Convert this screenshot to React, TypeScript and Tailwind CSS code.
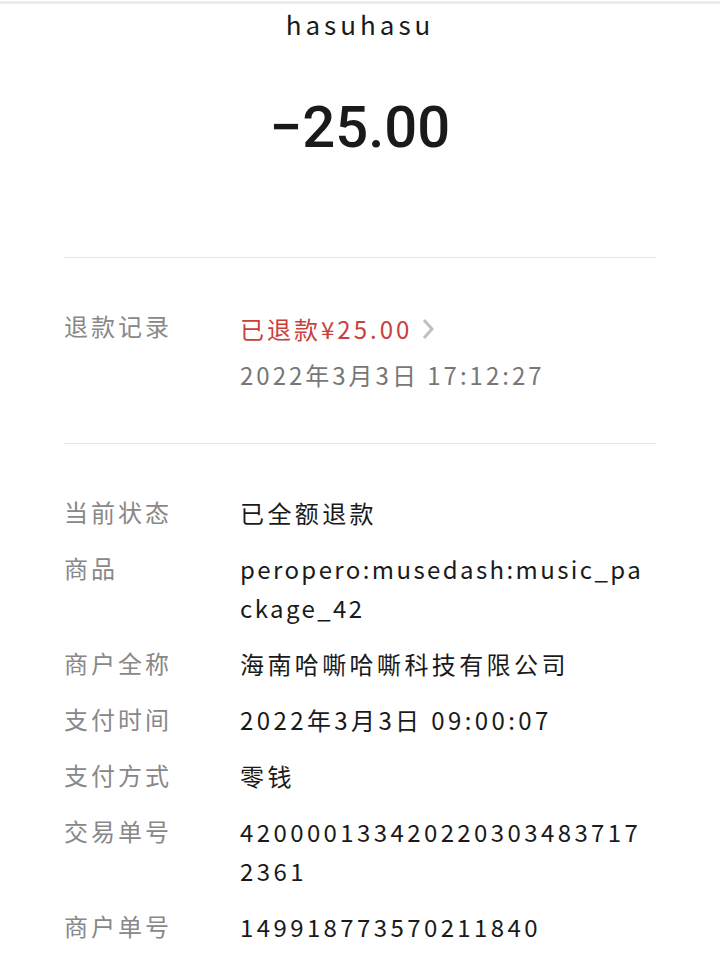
const font = { fontFamily: '"Noto Sans CJK SC", "Noto Sans", sans-serif' };

const rows: { label: string; lines: string[]; latin?: boolean }[] = [
  { label: '当前状态', lines: ['已全额退款'] },
  { label: '商品', lines: ['peropero:musedash:music_pa', 'ckage_42'], latin: true },
  { label: '商户全称', lines: ['海南哈嘶哈嘶科技有限公司'] },
  { label: '支付时间', lines: ['2022年3月3日 09:00:07'] },
  { label: '支付方式', lines: ['零钱'] },
  { label: '交易单号', lines: ['420000133420220303483717', '2361'] },
  { label: '商户单号', lines: ['149918773570211840'] },
];

const Row = ({ label, lines, latin }: { label: string; lines: string[]; latin?: boolean }) => (
  <div className="flex">
    <div className="w-[176px] shrink-0 text-[#888888] tracking-[3px] leading-[38px]">{label}</div>
    <div className={`flex-1 text-[#1a1a1a] leading-[39px] ${latin ? 'tracking-[2.4px]' : 'tracking-[3.4px]'}`}>
      {lines.map((l) => (
        <div key={l}>{l}</div>
      ))}
    </div>
  </div>
);

export default function App() {
  return (
    <div className="w-[720px] h-[970px] bg-white overflow-hidden text-[24px]" style={font}>
      <div className="h-[3px] bg-[#ececec] mt-[1px]" />
      <div className="text-center text-[26px] tracking-[4px] text-[#1a1a1a] leading-[36px] mt-[2px]">hasuhasu</div>
      <div
        className="text-center text-[58px] font-medium text-[#1a1a1a] leading-[66px] mt-[52px]"
        style={{ fontFamily: 'Roboto, "Noto Sans", sans-serif' }}
      >
        −25.00
      </div>
      <div className="mx-16 mt-[97px] border-t border-[#e6e6e6]" />
      <div className="mx-16 pt-[48px] pb-[45px] flex">
        <div className="w-[176px] shrink-0 text-[#888888] tracking-[3px] leading-[40px]">退款记录</div>
        <div className="flex-1 leading-[46px]">
          <div className="flex items-center text-[#c9403c] tracking-[3px]">
            <span>已退款¥25.00</span>
            <svg width="16" height="24" viewBox="0 0 16 24" className="ml-[8px]">
              <path d="M4 3 L12 12 L4 21" stroke="#c0c0c0" strokeWidth="3" fill="none" />
            </svg>
          </div>
          <div className="text-[#777777] tracking-[3px]">2022年3月3日 17:12:27</div>
        </div>
      </div>
      <div className="mx-16 border-t border-[#e6e6e6]" />
      <div className="mx-16 pt-[49px] flex flex-col gap-[17px]">
        {rows.map((r) => (
          <Row key={r.label} {...r} />
        ))}
      </div>
    </div>
  );
}
